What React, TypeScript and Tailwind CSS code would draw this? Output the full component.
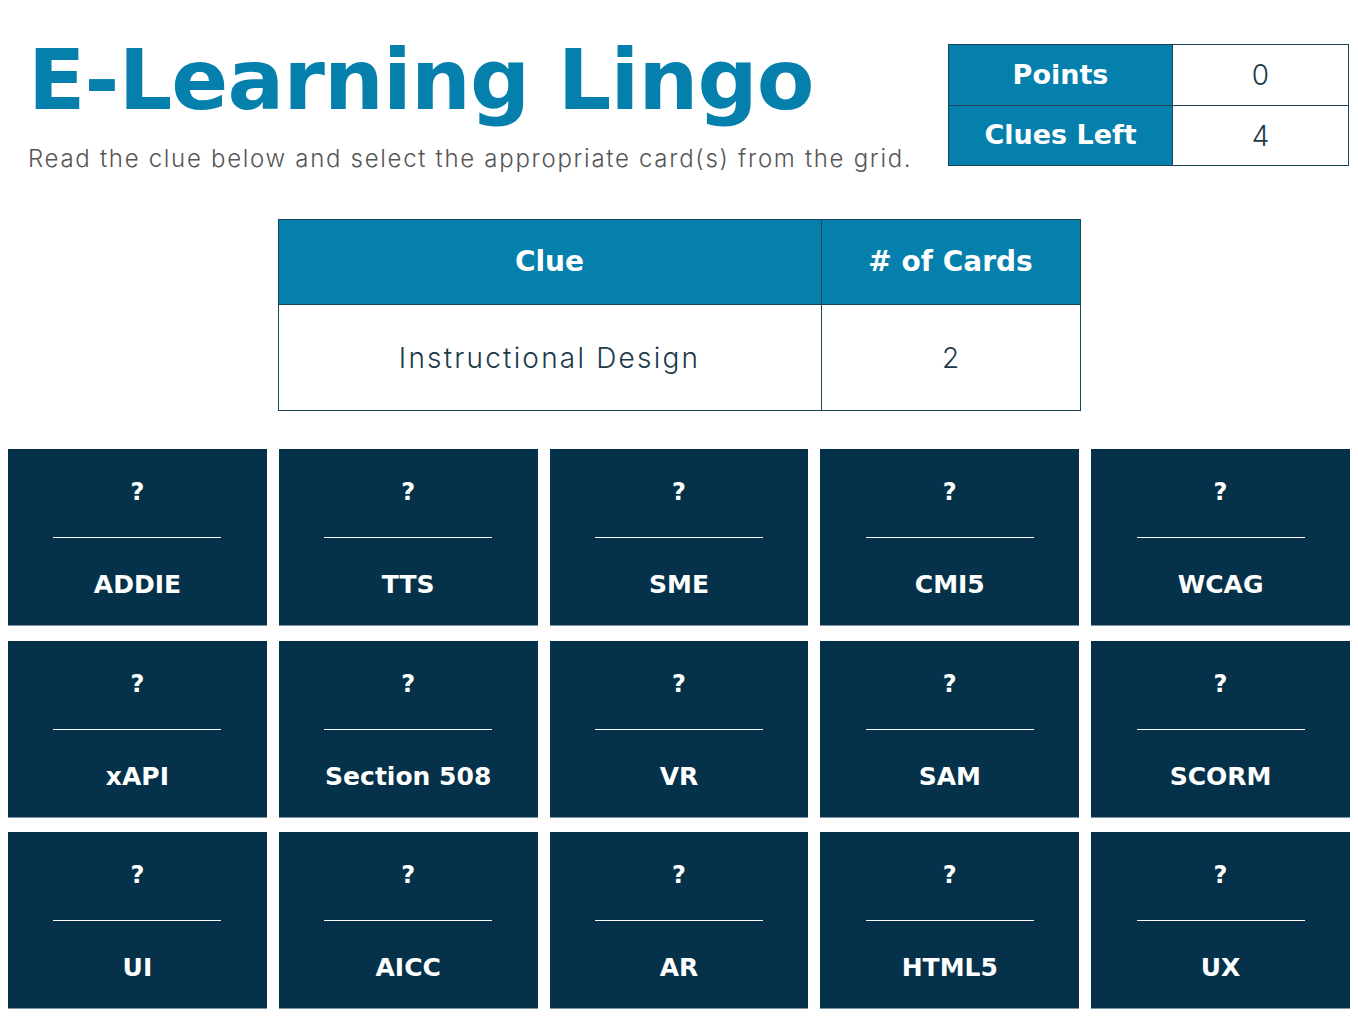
const cards = [
  'ADDIE', 'TTS', 'SME', 'CMI5', 'WCAG',
  'xAPI', 'Section 508', 'VR', 'SAM', 'SCORM',
  'UI', 'AICC', 'AR', 'HTML5', 'UX',
];

const bold = { fontFamily: '"DejaVu Sans", sans-serif' };

export default function App() {
  return (
    <div className="w-[1358px] h-[1018px] bg-white overflow-hidden" style={{ fontFamily: 'Inter, sans-serif' }}>
      {/* Header */}
      <div className="flex justify-between items-start pt-[44px] pr-[9px]">
        <div className="pl-[28px]">
          <h1
            className="text-[84px] leading-none font-bold text-[#0580ad] -mt-[6px] tracking-[-0.8px]"
            style={bold}
          >
            E-Learning Lingo
          </h1>
          <p className="text-[24px] font-light text-[#555] mt-[19px] tracking-[1.7px]">
            Read the clue below and select the appropriate card(s) from the grid.
          </p>
        </div>
        <div className="w-[401px] border border-[#1c4459] grid grid-cols-[224px_1fr]">
          <div className="h-[61px] bg-[#0580ad] text-white text-[27px] font-bold flex items-center justify-center border-b border-r border-[#1c4459]" style={bold}>
            Points
          </div>
          <div className="h-[61px] text-[28px] font-light text-[#1c3a4a] flex items-center justify-center border-b border-[#1c4459]">
            0
          </div>
          <div className="h-[59px] bg-[#0580ad] text-white text-[27px] font-bold flex items-center justify-center border-r border-[#1c4459]" style={bold}>
            Clues Left
          </div>
          <div className="h-[59px] text-[28px] font-light text-[#1c3a4a] flex items-center justify-center">
            4
          </div>
        </div>
      </div>

      {/* Clue table */}
      <div className="flex justify-center mt-[42px]">
        <div className="w-[803px] border border-[#1c4459] grid grid-cols-[543px_1fr]">
          <div className="h-[85px] bg-[#0580ad] text-white text-[28px] font-bold flex items-center justify-center border-b border-r border-[#1c4459]" style={bold}>
            Clue
          </div>
          <div className="h-[85px] bg-[#0580ad] text-white text-[28px] font-bold flex items-center justify-center border-b border-[#1c4459]" style={bold}>
            # of Cards
          </div>
          <div className="h-[105px] text-[28px] font-light text-[#1c3a4a] flex items-center justify-center border-r border-[#1c4459] tracking-[2.2px]">
            Instructional Design
          </div>
          <div className="h-[105px] text-[28px] font-light text-[#1c3a4a] flex items-center justify-center">
            2
          </div>
        </div>
      </div>

      {/* Card grid */}
      <div className="grid grid-cols-5 gap-x-3 gap-y-[14.5px] px-2 mt-[38px]">
        {cards.map(label => (
          <div
            key={label}
            className="h-[177px] bg-[#05324a] border-b border-[#7d95a3] flex flex-col items-center text-white"
            style={bold}
          >
            <div className="h-[89px] w-[168px] flex items-center justify-center border-b border-white text-[24px] font-bold pb-[2px]">
              ?
            </div>
            <div className="flex-1 flex items-center justify-center text-[25px] font-bold pt-[7px]">
              {label}
            </div>
          </div>
        ))}
      </div>
    </div>
  );
}
